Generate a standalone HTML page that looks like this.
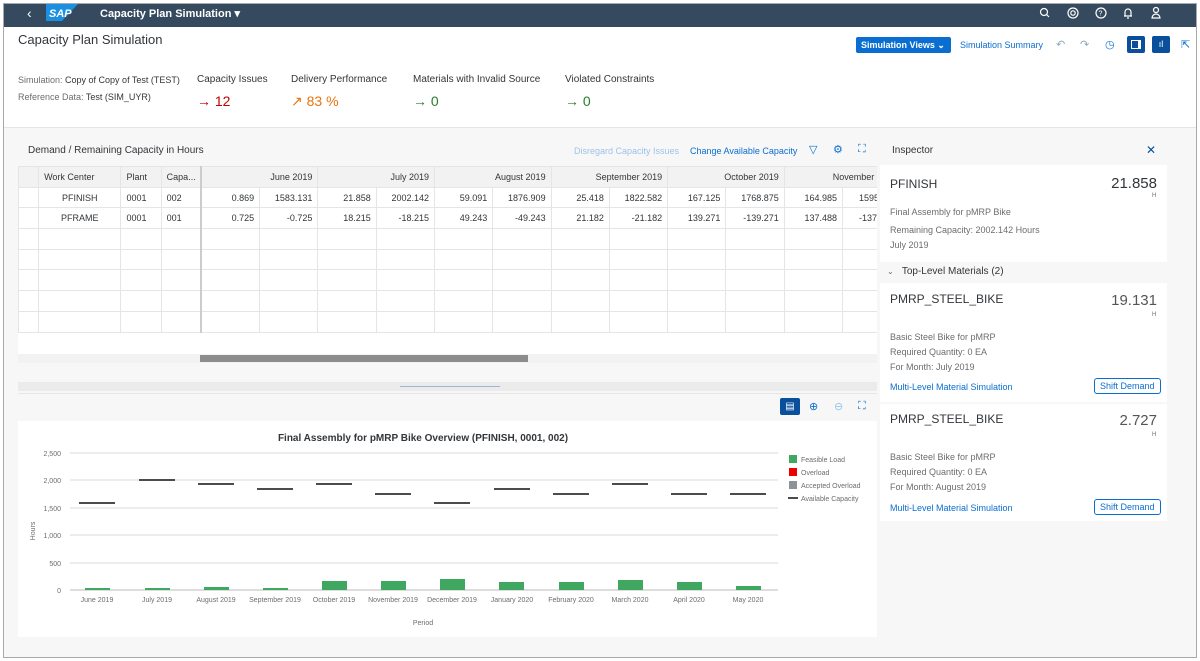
<!DOCTYPE html>
<html><head><meta charset="utf-8"><style>
*{box-sizing:border-box;margin:0;padding:0}
body{width:1200px;height:661px;overflow:hidden;background:#fff;font-family:"Liberation Sans",sans-serif;color:#32363a;position:relative}
.a{position:absolute;white-space:nowrap}
.frame{position:absolute;left:3px;top:3px;width:1194px;height:655px;border:1px solid #a9a9a9;background:#f7f7f7}
.shell{left:4px;top:4px;width:1192px;height:23px;background:#354a5f}
.hdr{left:4px;top:27px;width:1192px;height:101px;background:#fff;border-bottom:1px solid #e5e5e5}
table{border-collapse:collapse;font-size:9px;color:#32363a}
td{border:1px solid #e5e5e5;height:20.7px;padding:0 5px;text-align:right}
.th td{background:#f2f2f2;color:#32363a}
.lbl{font-size:9px;color:#6a6d70}
.link{color:#0a6ed1}
.btn{border:1px solid #0a6ed1;border-radius:3px;color:#0a6ed1;font-size:9px;padding:2px 5px;background:#fff}
.ic{color:#0a6ed1;font-size:11px}
</style></head><body>
<div class="frame"></div>
<div class="a shell"></div>
<div class="a" style="left:27px;top:5px;color:#fff;font-size:14px">&#8249;</div>
<svg class="a" style="left:46px;top:4px" width="32" height="17"><polygon points="0,0 32,0 16,17 0,17" fill="#1b8fe0"/><text x="3" y="13" font-family="Liberation Sans" font-weight="bold" font-style="italic" font-size="11" fill="#fff">SAP</text></svg>
<div class="a" style="left:100px;top:7px;color:#fff;font-size:11px;font-weight:bold">Capacity Plan Simulation ▾</div>
<svg class="a" style="left:1036px;top:6px" width="130" height="16" fill="none" stroke="#fff" stroke-width="1.2">
<circle cx="8" cy="6" r="3.5"/><line x1="10.5" y1="8.5" x2="13" y2="11"/>
<circle cx="37" cy="7" r="5"/><circle cx="37" cy="7" r="2.2"/>
<circle cx="65" cy="7" r="5"/><text x="62.5" y="9.5" font-size="7" fill="#fff" stroke="none" font-family="Liberation Sans">?</text>
<path d="M88 10 h8 M89 10 v-4 a3 3 0 0 1 6 0 v4 M91 12 h2"/>
<circle cx="120" cy="4" r="2.5"/><path d="M116 12 a4 4 0 0 1 8 0 z"/>
</svg>
<div class="a hdr"></div>
<div class="a" style="left:18px;top:32px;font-size:13px">Capacity Plan Simulation</div>
<div class="a" style="left:856px;top:37px;width:95px;height:16px;background:#0a6ed1;border-radius:2px;color:#fff;font-size:9px;font-weight:bold;padding:3px 5px">Simulation Views ⌄</div>
<div class="a link" style="left:960px;top:40px;font-size:9px">Simulation Summary</div>
<div class="a ic" style="left:1056px;top:38px;color:#8ab">↶</div>
<div class="a ic" style="left:1080px;top:38px;color:#8ab">↷</div>
<div class="a ic" style="left:1105px;top:38px">◷</div>
<div class="a" style="left:1127px;top:36px;width:18px;height:17px;background:#0a4f9c;border-radius:2px"><div style="margin:4px 4px;width:10px;height:9px;border:1px solid #fff;border-right-width:3px"></div></div>
<div class="a" style="left:1152px;top:36px;width:18px;height:17px;background:#0a4f9c;border-radius:2px;color:#fff;font-size:9px;text-align:center;line-height:17px">ıl</div>
<div class="a ic" style="left:1181px;top:38px">⇱</div>
<div class="a lbl" style="left:18px;top:75px">Simulation: <span style="color:#32363a">Copy of Copy of Test (TEST)</span></div>
<div class="a lbl" style="left:18px;top:92px">Reference Data: <span style="color:#32363a">Test (SIM_UYR)</span></div>
<div class="a" style="left:197px;top:74px;font-size:10px">Capacity Issues</div>
<div class="a" style="left:197px;top:93px;font-size:14px;color:#bb0000">→ 12</div>
<div class="a" style="left:291px;top:74px;font-size:10px">Delivery Performance</div>
<div class="a" style="left:291px;top:93px;font-size:14px;color:#e9730c">↗ 83 %</div>
<div class="a" style="left:413px;top:74px;font-size:10px">Materials with Invalid Source</div>
<div class="a" style="left:413px;top:93px;font-size:14px;color:#2b7d2b">→ 0</div>
<div class="a" style="left:565px;top:74px;font-size:10px">Violated Constraints</div>
<div class="a" style="left:565px;top:93px;font-size:14px;color:#2b7d2b">→ 0</div>

<div class="a" style="left:28px;top:145px;font-size:10px">Demand / Remaining Capacity in Hours</div>
<div class="a" style="left:574px;top:146px;font-size:9px;color:#9cc3ea">Disregard Capacity Issues</div>
<div class="a link" style="left:690px;top:146px;font-size:9px">Change Available Capacity</div>
<div class="a ic" style="left:809px;top:143px">▽</div>
<div class="a ic" style="left:833px;top:143px">⚙</div>
<div class="a ic" style="left:858px;top:143px">⛶</div>
<div class="a" style="left:18px;top:166px;width:859px;height:197px;background:#fff;overflow:hidden">
<table style="table-layout:fixed;width:1000px">
<colgroup><col style="width:20px"><col style="width:82px"><col style="width:40px"><col style="width:40px"><col span="14" style="width:58px"></colgroup>
<tr class="th"><td></td><td style="text-align:left">Work Center</td><td style="text-align:left">Plant</td><td style="text-align:left;border-right:2px solid #ccc">Capa...</td><td colspan="2">June 2019</td><td colspan="2">July 2019</td><td colspan="2">August 2019</td><td colspan="2">September 2019</td><td colspan="2">October 2019</td><td colspan="2" style="text-align:left;padding-left:48px">November 2019</td><td colspan="2"></td></tr>
<tr><td></td><td style="text-align:center">PFINISH</td><td style="text-align:left">0001</td><td style="text-align:left;border-right:2px solid #ccc">002</td><td>0.869</td><td>1583.131</td><td>21.858</td><td>2002.142</td><td>59.091</td><td>1876.909</td><td>25.418</td><td>1822.582</td><td>167.125</td><td>1768.875</td><td>164.985</td><td style="text-align:left;padding-left:16px">1595.015</td><td></td><td></td></tr>
<tr><td></td><td style="text-align:center">PFRAME</td><td style="text-align:left">0001</td><td style="text-align:left;border-right:2px solid #ccc">001</td><td>0.725</td><td>-0.725</td><td>18.215</td><td>-18.215</td><td>49.243</td><td>-49.243</td><td>21.182</td><td>-21.182</td><td>139.271</td><td>-139.271</td><td>137.488</td><td style="text-align:left;padding-left:16px">-137.488</td><td></td><td></td></tr>
<tr><td></td><td></td><td></td><td style="border-right:2px solid #ccc"></td><td></td><td></td><td></td><td></td><td></td><td></td><td></td><td></td><td></td><td></td><td></td><td></td><td></td><td></td></tr>
<tr><td></td><td></td><td></td><td style="border-right:2px solid #ccc"></td><td></td><td></td><td></td><td></td><td></td><td></td><td></td><td></td><td></td><td></td><td></td><td></td><td></td><td></td></tr>
<tr><td></td><td></td><td></td><td style="border-right:2px solid #ccc"></td><td></td><td></td><td></td><td></td><td></td><td></td><td></td><td></td><td></td><td></td><td></td><td></td><td></td><td></td></tr>
<tr><td></td><td></td><td></td><td style="border-right:2px solid #ccc"></td><td></td><td></td><td></td><td></td><td></td><td></td><td></td><td></td><td></td><td></td><td></td><td></td><td></td><td></td></tr>
<tr><td></td><td></td><td></td><td style="border-right:2px solid #ccc"></td><td></td><td></td><td></td><td></td><td></td><td></td><td></td><td></td><td></td><td></td><td></td><td></td><td></td><td></td></tr>
</table>
<div class="a" style="left:0;top:188px;width:859px;height:9px;background:#f2f2f2"></div>
<div class="a" style="left:182px;top:189px;width:328px;height:7px;background:#8c8c8c"></div>
</div>
<div class="a" style="left:18px;top:382px;width:859px;height:9px;background:#ebebeb"></div>
<div class="a" style="left:400px;top:386px;width:100px;height:1px;background:#9bb8d6"></div>
<div class="a" style="left:18px;top:393px;width:859px;height:1px;background:#e5e5e5"></div>
<div class="a" style="left:780px;top:398px;width:20px;height:17px;background:#0a4f9c;border-radius:2px;color:#fff;font-size:10px;text-align:center;line-height:17px">▤</div>
<div class="a ic" style="left:809px;top:400px">⊕</div>
<div class="a ic" style="left:834px;top:400px;color:#9cc3ea">⊖</div>
<div class="a ic" style="left:858px;top:400px">⛶</div>

<svg class="a" style="left:18px;top:421px" width="859" height="216">
<rect width="859" height="216" fill="#fff"/>
<text x="405" y="20" text-anchor="middle" font-family="Liberation Sans" font-weight="bold" font-size="10" fill="#32363a">Final Assembly for pMRP Bike Overview (PFINISH, 0001, 002)</text>
<g stroke="#d9d9d9" stroke-width="1">
<line x1="52" y1="32" x2="760" y2="32"/><line x1="52" y1="59" x2="760" y2="59"/><line x1="52" y1="87" x2="760" y2="87"/><line x1="52" y1="114" x2="760" y2="114"/><line x1="52" y1="142" x2="760" y2="142"/><line x1="52" y1="169" x2="760" y2="169" stroke="#bbb"/></g>
<g font-family="Liberation Sans" font-size="7" fill="#6a6d70" text-anchor="end">
<text x="43" y="35">2,500</text><text x="43" y="62">2,000</text><text x="43" y="90">1,500</text><text x="43" y="117">1,000</text><text x="43" y="145">500</text><text x="43" y="172">0</text></g>
<text x="0" y="0" transform="translate(17,110) rotate(-90)" font-family="Liberation Sans" font-size="7" fill="#6a6d70" text-anchor="middle">Hours</text>
<text x="405" y="204" text-anchor="middle" font-family="Liberation Sans" font-size="7" fill="#6a6d70">Period</text>
<g fill="#3fa75f">
<rect x="67" y="167" width="25" height="2"/><rect x="127" y="167" width="25" height="2"/><rect x="186" y="166" width="25" height="3"/><rect x="245" y="167" width="25" height="2"/><rect x="304" y="160" width="25" height="9"/><rect x="363" y="160" width="25" height="9"/><rect x="422" y="158" width="25" height="11"/><rect x="481" y="161" width="25" height="8"/><rect x="541" y="161" width="25" height="8"/><rect x="600" y="159" width="25" height="10"/><rect x="659" y="161" width="25" height="8"/><rect x="718" y="165" width="25" height="4"/></g>
<g stroke="#111" stroke-width="1.5">
<line x1="61" y1="82" x2="97" y2="82"/><line x1="121" y1="59" x2="157" y2="59"/><line x1="180" y1="63" x2="216" y2="63"/><line x1="239" y1="68" x2="275" y2="68"/><line x1="298" y1="63" x2="334" y2="63"/><line x1="357" y1="73" x2="393" y2="73"/><line x1="416" y1="82" x2="452" y2="82"/><line x1="476" y1="68" x2="512" y2="68"/><line x1="535" y1="73" x2="571" y2="73"/><line x1="594" y1="63" x2="630" y2="63"/><line x1="653" y1="73" x2="689" y2="73"/><line x1="712" y1="73" x2="748" y2="73"/></g>
<g font-family="Liberation Sans" font-size="7" fill="#6a6d70" text-anchor="middle">
<text x="79" y="181">June 2019</text><text x="139" y="181">July 2019</text><text x="198" y="181">August 2019</text><text x="257" y="181">September 2019</text><text x="316" y="181">October 2019</text><text x="375" y="181">November 2019</text><text x="434" y="181">December 2019</text><text x="494" y="181">January 2020</text><text x="553" y="181">February 2020</text><text x="612" y="181">March 2020</text><text x="671" y="181">April 2020</text><text x="730" y="181">May 2020</text></g>
<rect x="771" y="34" width="8" height="8" fill="#3fa75f"/><rect x="771" y="47" width="8" height="8" fill="#e00"/><rect x="771" y="60" width="8" height="8" fill="#8c9399"/><line x1="770" y1="77" x2="780" y2="77" stroke="#111" stroke-width="1.5"/>
<g font-family="Liberation Sans" font-size="7" fill="#6a6d70"><text x="783" y="41">Feasible Load</text><text x="783" y="54">Overload</text><text x="783" y="67">Accepted Overload</text><text x="783" y="80">Available Capacity</text></g>
</svg>

<div class="a" style="left:892px;top:145px;font-size:10px">Inspector</div>
<div class="a" style="left:1146px;top:143px;font-size:12px;color:#0a4f9c">✕</div>
<div class="a" style="left:880px;top:165px;width:287px;height:97px;background:#fff"></div>
<div class="a" style="left:890px;top:177px;font-size:12px">PFINISH</div>
<div class="a" style="left:1100px;top:175px;width:57px;text-align:right;font-size:15px">21.858</div>
<div class="a" style="left:1152px;top:193px;font-size:6px;color:#6a6d70">H</div>
<div class="a lbl" style="left:890px;top:207px">Final Assembly for pMRP Bike</div>
<div class="a lbl" style="left:890px;top:225px">Remaining Capacity: 2002.142 Hours</div>
<div class="a lbl" style="left:890px;top:240px">July 2019</div>
<div class="a" style="left:887px;top:266px;font-size:10px"><span style="color:#6a6d70;font-size:8px">⌄</span>&nbsp;&nbsp; Top-Level Materials (2)</div>
<div class="a" style="left:880px;top:283px;width:287px;height:119px;background:#fff"></div>
<div class="a" style="left:890px;top:292px;font-size:12px">PMRP_STEEL_BIKE</div>
<div class="a" style="left:1100px;top:292px;width:57px;text-align:right;font-size:15px;color:#555">19.131</div>
<div class="a" style="left:1152px;top:312px;font-size:6px;color:#6a6d70">H</div>
<div class="a lbl" style="left:890px;top:332px">Basic Steel Bike for pMRP</div>
<div class="a lbl" style="left:890px;top:347px">Required Quantity: 0 EA</div>
<div class="a lbl" style="left:890px;top:362px">For Month: July 2019</div>
<div class="a link" style="left:890px;top:382px;font-size:9px">Multi-Level Material Simulation</div>
<div class="a btn" style="left:1094px;top:378px">Shift Demand</div>
<div class="a" style="left:880px;top:404px;width:287px;height:117px;background:#fff"></div>
<div class="a" style="left:890px;top:412px;font-size:12px">PMRP_STEEL_BIKE</div>
<div class="a" style="left:1100px;top:412px;width:57px;text-align:right;font-size:15px;color:#555">2.727</div>
<div class="a" style="left:1152px;top:432px;font-size:6px;color:#6a6d70">H</div>
<div class="a lbl" style="left:890px;top:452px">Basic Steel Bike for pMRP</div>
<div class="a lbl" style="left:890px;top:467px">Required Quantity: 0 EA</div>
<div class="a lbl" style="left:890px;top:482px">For Month: August 2019</div>
<div class="a link" style="left:890px;top:503px;font-size:9px">Multi-Level Material Simulation</div>
<div class="a btn" style="left:1094px;top:499px">Shift Demand</div>
</body></html>
